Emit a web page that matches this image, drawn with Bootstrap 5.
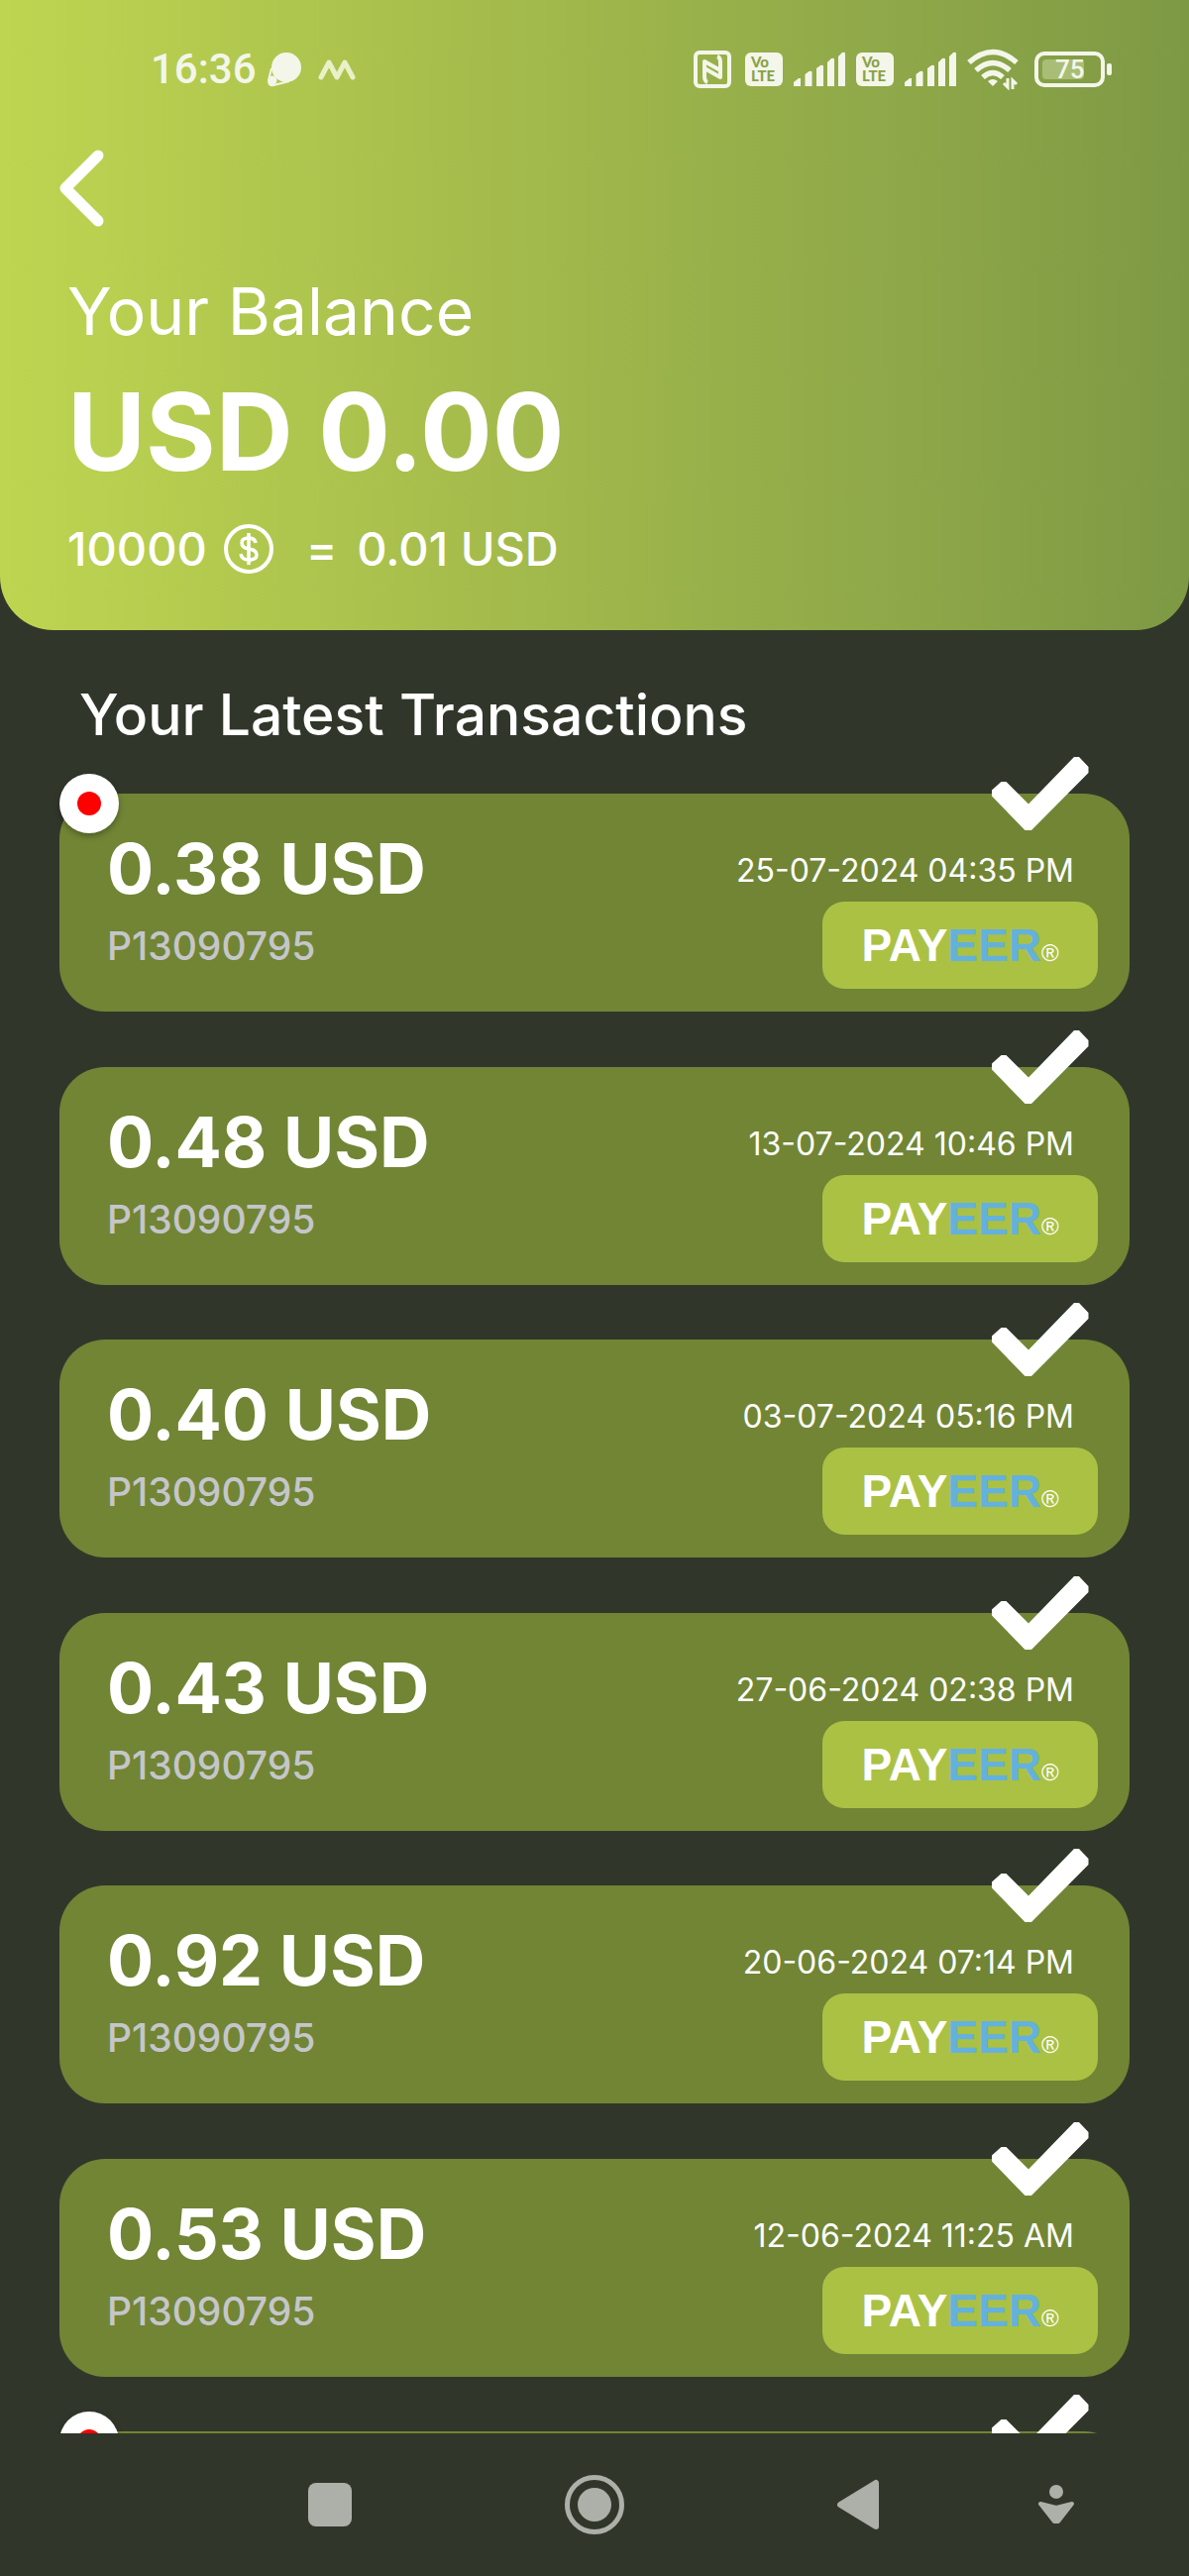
<!DOCTYPE html>
<html lang="en">
<head>
<meta charset="utf-8">
<meta name="viewport" content="width=device-width, initial-scale=1">
<title>Your Balance</title>
<link href="https://cdn.jsdelivr.net/npm/bootstrap@5.3.0/dist/css/bootstrap.min.css" rel="stylesheet">
<style>
  :root { --ink: #30372a; --panel: #718535; --lime: #abc144; --soft: #f4f6ea; }
  body { background: var(--ink); color: #fff; font-family: Inter, "Open Sans", sans-serif; }
  svg { display: block; flex: none; }
  .hero { background: linear-gradient(90deg, #bed551 0%, #9fb64b 50%, #8fa849 75%, #7e9944 100%); border-radius: 0 0 54px 54px; padding-bottom: 54px; }
  .status { font-family: Roboto, sans-serif; color: var(--soft); padding: 45px 76px 0 152px; height: 92px; }
  .clock { font-size: 42px; line-height: 50px; font-weight: 500; }
  .signals { gap: 10px; }
  .back { padding: 0; margin: 56px 0 0 58px; width: 50px; height: 84px; }
  .balance { padding: 44px 68px 0; }
  .b-label { font-size: 66px; line-height: 76px; }
  .b-total { font-size: 108px; line-height: 132px; font-weight: 700; margin-top: 18px; }
  .b-rate { font-size: 47px; line-height: 56px; font-weight: 500; margin-top: 24px; }
  .list { overflow: hidden; min-height: 0; padding: 54px 60px 0; }
  .list-title { font-size: 57px; line-height: 64px; font-weight: 500; margin: 0 20px 47px; }
  .pay { background: var(--panel); border-radius: 46px; min-height: 220px; padding: 34px 32px 22px 48px; flex: none; margin-bottom: 55px; }
  .pay:nth-child(odd) { margin-bottom: 56px; }
  .sum { font-size: 70px; line-height: 84px; font-weight: 700; }
  .acct { font-size: 39px; line-height: 48px; font-weight: 500; color: #c5c6ca; margin-top: 12px; }
  .when { font-size: 32px; line-height: 40px; margin: 24px 24px 11px 0; }
  .brand { background: var(--lime); border-radius: 22px; width: 278px; height: 88px; font: 700 46px/88px "Liberation Sans", Arial, sans-serif; }
  .brand .blue { color: #64b1dc; }
  .brand .reg { font-size: 24px; font-weight: 400; line-height: 24px; }
  .tick { position: absolute; right: 41px; top: -37px; }
  .fresh { position: absolute; left: 0; top: -20px; width: 60px; height: 60px; background: #fff; border-radius: 50%; box-shadow: 0 3px 6px rgba(0,0,0,.3); }
  .fresh::after { content: ""; width: 24px; height: 24px; border-radius: 50%; background: #f00; }
  .softkeys { height: 144px; padding: 0 67px 0 200px; flex: none; color: #adafa9; }
  .softkeys .btn, .back { color: inherit; border: 0; }
  .softkeys .btn { flex: 2 1 0; display: flex; justify-content: center; }
  .softkeys .btn:last-child { flex-grow: 1; }
</style>
</head>
<body>
<svg width="0" height="0" class="position-absolute" aria-hidden="true">
  <symbol id="tick" viewBox="0 0 98 74"><path d="M0 37.500v-4L9.500 25h5L37 47.500 83 0h5l9.500 10v6L40 74h-6.500L0 39.500z" fill="#fff"/></symbol>
  <symbol id="bars" viewBox="0 0 54 36"><path d="M1 35V31l5-4h2v8zM12.500 35V23l4-3q3-1 3 1v14zM24 35V17l4-3q3-1 3 1v20zM35 35V11l4-4q3-1 3 1v27zM46 35V5l4-4q3-1 3 1v33z" fill="#f4f6ea"/></symbol>
</svg>
<div class="d-flex flex-column vh-100 overflow-hidden">
  <header class="hero flex-shrink-0">
    <div class="status d-flex align-items-start justify-content-between">
      <div class="d-flex align-items-center">
        <span class="clock">16:36</span>
        <svg class="ms-2 me-3" width="38" height="38" viewBox="0 0 38 38" fill="#f4f6ea"><circle cx="22" cy="17" r="15"/><circle cx="8" cy="30" r="4.500"/><path d="M7 18 4 30q0 6 5 5l16-4" fill="none" stroke="#f4f6ea" stroke-width="2"/></svg>
        <svg width="38" height="22" viewBox="0 0 38 22" fill="none" stroke="#eaf0c8" stroke-width="5" stroke-linecap="round" stroke-linejoin="round"><path d="m3 19 8-15 8 15 8-15 8 15"/></svg>
      </div>
      <div class="signals d-flex align-items-center pt-1">
        <svg class="me-1" width="38" height="42" viewBox="0 0 38 42" fill="none" stroke="#f4f6ea" stroke-width="4" stroke-linejoin="round"><rect x="2" y="4" width="34" height="34" rx="4"/><path d="M14 34q-3-1-3-6V13l16 9M24 8q3 1 3 6v15l-16-9"/></svg>
        <svg width="38" height="34" viewBox="0 0 38 34"><rect width="38" height="34" rx="6" fill="#f4f6ea"/><g fill="#8aa247" font-family="Lato, sans-serif" font-weight="900"><text x="6" y="15" font-size="15">Vo</text><text x="6" y="29" font-size="15">LTE</text></g></svg>
        <svg width="54" height="36"><use href="#bars"/></svg>
        <svg width="38" height="34" viewBox="0 0 38 34"><rect width="38" height="34" rx="6" fill="#f4f6ea"/><g fill="#8aa247" font-family="Lato, sans-serif" font-weight="900"><text x="6" y="15" font-size="15">Vo</text><text x="6" y="29" font-size="15">LTE</text></g></svg>
        <svg width="54" height="36"><use href="#bars"/></svg>
        <svg width="54" height="42" viewBox="0 0 54 42" fill="none" stroke="#f4f6ea" stroke-width="5.500"><path d="M2 14q24-21 48 0M9 22q17-15 34 0M16 29q10-9 20 0"/><path d="m26 38-5-5q5-4 10 0z" fill="#f4f6ea" stroke="none"/><path d="M41 30v9l-4-4M46 41v-9l4 4" stroke-width="3"/></svg>
        <svg class="ms-1" width="80" height="36" viewBox="0 0 80 36"><rect x="2" y="2" width="67" height="32" rx="8" fill="none" stroke="#f4f6ea" stroke-width="4"/><rect x="8" y="8" width="42" height="20" rx="4" fill="#a9bd77"/><rect x="73" y="12" width="5" height="12" rx="2" fill="#f4f6ea"/><text x="21" y="27" font-size="26" font-weight="500" fill="#f4f6ea">75</text></svg>
      </div>
    </div>
    <button type="button" class="btn back d-block" aria-label="Back">
      <svg width="50" height="84" viewBox="0 0 50 84" fill="none" stroke="#fff" stroke-width="11" stroke-linecap="round" stroke-linejoin="round"><path d="M41 9 8 42l33 33"/></svg>
    </button>
    <div class="balance">
      <div class="b-label">Your Balance</div>
      <div class="b-total">USD 0.00</div>
      <div class="b-rate d-flex align-items-center">
        <span>10000</span>
        <svg class="ms-3" width="52" height="52" viewBox="0 0 52 52" fill="none" stroke="#fff" stroke-width="4"><circle cx="26" cy="26" r="23"/><path d="M33 20q-1-5-7-5-7 0-7 5t7 6q8 1 8 6t-8 5q-7 0-8-6M26 10v32" stroke-width="3.500"/></svg>
        <span class="ms-4 ps-2">=</span>
        <span class="ms-3 ps-1">0.01 USD</span>
      </div>
    </div>
  </header>

  <main class="list flex-grow-1">
    <h1 class="list-title">Your Latest Transactions</h1>
    <div class="d-flex flex-column">
      <article class="pay position-relative d-flex justify-content-between">
        <span class="fresh d-flex align-items-center justify-content-center"></span>
        <svg class="tick" width="98" height="74"><use href="#tick"/></svg>
        <div><div class="sum">0.38 USD</div><div class="acct">P13090795</div></div>
        <div class="d-flex flex-column align-items-end"><time class="when">25-07-2024 04:35 PM</time><div class="brand d-flex justify-content-center"><span>PAY</span><span class="blue">EER</span><span class="reg align-self-center pt-3">®</span></div></div>
      </article>
      <article class="pay position-relative d-flex justify-content-between">
        <svg class="tick" width="98" height="74"><use href="#tick"/></svg>
        <div><div class="sum">0.48 USD</div><div class="acct">P13090795</div></div>
        <div class="d-flex flex-column align-items-end"><time class="when">13-07-2024 10:46 PM</time><div class="brand d-flex justify-content-center"><span>PAY</span><span class="blue">EER</span><span class="reg align-self-center pt-3">®</span></div></div>
      </article>
      <article class="pay position-relative d-flex justify-content-between">
        <svg class="tick" width="98" height="74"><use href="#tick"/></svg>
        <div><div class="sum">0.40 USD</div><div class="acct">P13090795</div></div>
        <div class="d-flex flex-column align-items-end"><time class="when">03-07-2024 05:16 PM</time><div class="brand d-flex justify-content-center"><span>PAY</span><span class="blue">EER</span><span class="reg align-self-center pt-3">®</span></div></div>
      </article>
      <article class="pay position-relative d-flex justify-content-between">
        <svg class="tick" width="98" height="74"><use href="#tick"/></svg>
        <div><div class="sum">0.43 USD</div><div class="acct">P13090795</div></div>
        <div class="d-flex flex-column align-items-end"><time class="when">27-06-2024 02:38 PM</time><div class="brand d-flex justify-content-center"><span>PAY</span><span class="blue">EER</span><span class="reg align-self-center pt-3">®</span></div></div>
      </article>
      <article class="pay position-relative d-flex justify-content-between">
        <svg class="tick" width="98" height="74"><use href="#tick"/></svg>
        <div><div class="sum">0.92 USD</div><div class="acct">P13090795</div></div>
        <div class="d-flex flex-column align-items-end"><time class="when">20-06-2024 07:14 PM</time><div class="brand d-flex justify-content-center"><span>PAY</span><span class="blue">EER</span><span class="reg align-self-center pt-3">®</span></div></div>
      </article>
      <article class="pay position-relative d-flex justify-content-between">
        <svg class="tick" width="98" height="74"><use href="#tick"/></svg>
        <div><div class="sum">0.53 USD</div><div class="acct">P13090795</div></div>
        <div class="d-flex flex-column align-items-end"><time class="when">12-06-2024 11:25 AM</time><div class="brand d-flex justify-content-center"><span>PAY</span><span class="blue">EER</span><span class="reg align-self-center pt-3">®</span></div></div>
      </article>
      <article class="pay position-relative">
        <span class="fresh d-flex align-items-center justify-content-center"></span>
        <svg class="tick" width="98" height="74"><use href="#tick"/></svg>
      </article>
    </div>
  </main>

  <nav class="softkeys d-flex align-items-center" aria-label="System">
    <button type="button" class="btn p-0" aria-label="Recent apps"><svg width="54" height="64" viewBox="0 0 54 64" fill="currentColor"><rect x="5" y="10" width="44" height="44" rx="8"/></svg></button>
    <button type="button" class="btn p-0" aria-label="Home"><svg width="62" height="62" viewBox="0 0 62 62"><circle cx="31" cy="31" r="27.500" fill="none" stroke="currentColor" stroke-width="5"/><circle cx="31" cy="31" r="17" fill="currentColor"/></svg></button>
    <button type="button" class="btn p-0" aria-label="Back"><svg width="44" height="54" viewBox="0 0 44 54" fill="currentColor" stroke="currentColor" stroke-width="6" stroke-linejoin="round"><path d="M4 27 40 5v44z"/></svg></button>
    <button type="button" class="btn p-0" aria-label="Accessibility"><svg width="54" height="54" viewBox="0 0 54 54" fill="currentColor"><circle cx="27" cy="14" r="7"/><path d="M11 26 27 30 43 26 29 44h-4z" stroke="currentColor" stroke-width="4" stroke-linejoin="round"/></svg></button>
  </nav>
</div>
<script src="https://cdn.jsdelivr.net/npm/bootstrap@5.3.0/dist/js/bootstrap.bundle.min.js"></script>
</body>
</html>
